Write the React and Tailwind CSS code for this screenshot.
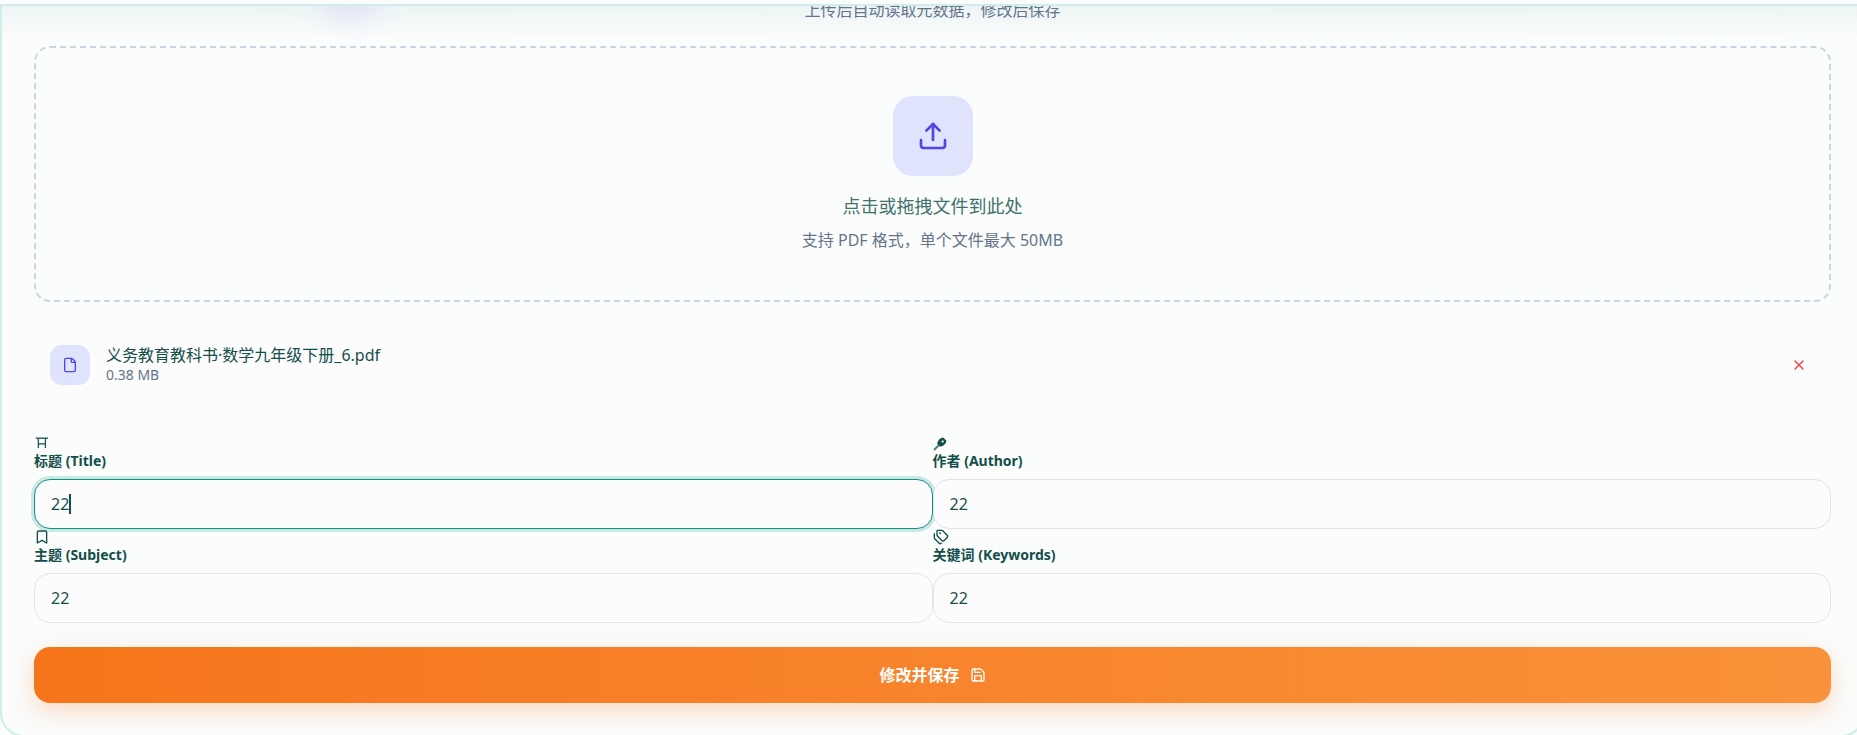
import React from "react";
import { Upload, File, X, Bookmark, Tags, Save } from "lucide-react";

const TitleIcon = () => (
  <svg width="16" height="14" viewBox="0 0 16 14" fill="none" stroke="currentColor" strokeWidth="1.2">
    <path d="M1.8 2.2H14" strokeWidth="1.3" />
    <path d="M4.3 2.5V12M11.4 2.5V12M4.3 7.8H11.4" />
  </svg>
);

const PenIcon = () => (
  <svg width="16" height="16" viewBox="0 0 16 16" fill="none">
    <path d="M4.2 9.1C4.4 5.9 7.4 2.5 10.2 2.6L13.4 5.8C13.4 8.8 9.9 11.4 7 11.8Z" fill="currentColor" />
    <circle cx="9.7" cy="6.5" r="1.1" fill="#fbfcfc" />
    <path d="M5.5 10.5L1 15" stroke="currentColor" strokeWidth="1.8" strokeOpacity="0.75" />
  </svg>
);

function Field({ icon, label, focused }) {
  return (
    <div className="flex flex-col">
      <div className="flex h-4 items-center text-[#134e4a]">{icon}</div>
      <label className="mb-2 block h-5 text-sm font-bold leading-5 text-[#134e4a]">{label}</label>
      <div className="relative">
        <input
          readOnly
          value="22"
          className={
            focused
              ? "block h-[50px] w-full rounded-2xl border border-[#0d9488] bg-[#fcfcfd] px-4 text-base text-[#134e4a] shadow-[0_0_0_3px_rgba(13,148,136,0.2)] outline-none"
              : "block h-[50px] w-full rounded-2xl border border-[#e2e4e9] bg-[#fcfcfd] px-4 text-base text-[#134e4a] outline-none"
          }
        />
        {focused && <span className="absolute left-[35px] top-[15px] h-5 w-[1.5px] bg-[#134e4a]" />}
      </div>
    </div>
  );
}

export default function App() {
  return (
    <div className="h-[735px] w-[1857px] overflow-hidden bg-[#fbfcfc] pt-1 font-['Noto_Sans','Noto_Sans_CJK_SC',sans-serif]">
      <div className="relative h-[733px] w-[1865px] overflow-hidden rounded-b-3xl border-2 border-[#cfeeea] bg-[#fbfcfc] px-8">
        <div className="pointer-events-none absolute inset-x-0 top-0 h-8 bg-gradient-to-b from-[#ecf5f4] to-transparent" />
        <div className="pointer-events-none absolute left-[316px] top-[-32px] h-[46px] w-[64px] rounded-full bg-[#dcd8f8] opacity-60 blur-md" />
        <p className="relative -mt-[8px] h-6 text-center text-base leading-6 text-[#64748b]">上传后自动读取元数据，修改后保存</p>

        <div className="mt-6 flex h-[256px] flex-col items-center rounded-2xl border-2 border-dashed border-[#cbd5e1] pt-12">
          <div className="flex h-20 w-20 items-center justify-center rounded-[20px] bg-[#dfe3fc] text-[#4f46e5]">
            <Upload size={32} />
          </div>
          <p className="mt-4 text-lg font-normal leading-7 text-[#41726a]">点击或拖拽文件到此处</p>
          <p className="mt-2 text-base leading-6 text-[#64748b]">支持 PDF 格式，单个文件最大 50MB</p>
        </div>

        <div className="mt-[27px] flex h-[72px] items-center rounded-xl bg-[#fcfcfc] px-4">
          <div className="flex h-10 w-10 items-center justify-center rounded-xl bg-[#dfe3fc] text-[#4f46e5]">
            <File size={16} />
          </div>
          <div className="ml-4 flex-1">
            <p className="text-base leading-5 text-[#134e4a]">义务教育教科书·数学九年级下册_6.pdf</p>
            <p className="text-sm leading-5 text-[#64748b]">0.38 MB</p>
          </div>
          <button className="p-2 text-[#ef4444]">
            <X size={16} />
          </button>
        </div>

        <div className="mt-[34px] grid grid-cols-2">
          <Field icon={<TitleIcon />} label="标题 (Title)" focused />
          <Field icon={<PenIcon />} label="作者 (Author)" />
          <Field icon={<Bookmark size={16} />} label="主题 (Subject)" />
          <Field icon={<Tags size={16} />} label="关键词 (Keywords)" />
        </div>

        <button className="mt-6 flex h-14 w-full items-center justify-center gap-[10px] rounded-2xl bg-gradient-to-r from-[#f6751a] to-[#f9923a] text-base font-bold text-white shadow-[0_8px_24px_rgba(249,115,22,0.25)]">
          修改并保存
          <Save size={16} />
        </button>
      </div>
    </div>
  );
}
